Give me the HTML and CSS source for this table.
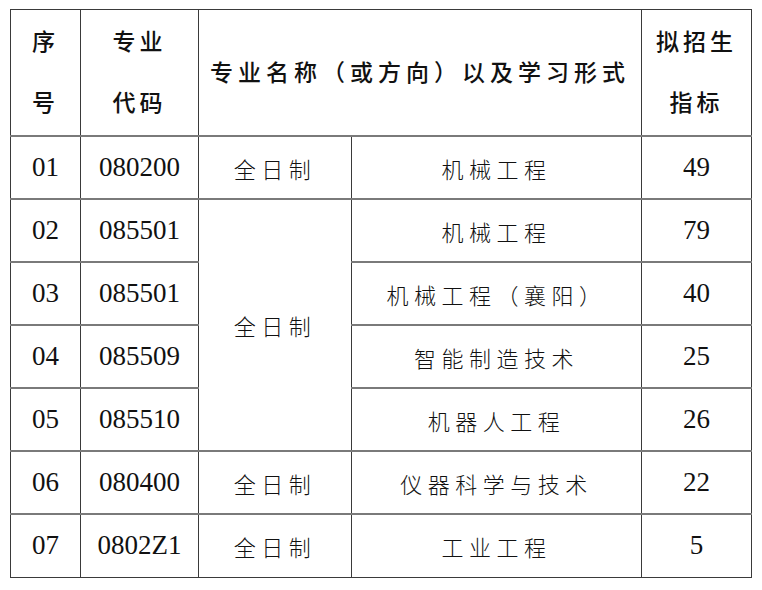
FILE: index.html
```html
<!DOCTYPE html>
<html lang="zh">
<head>
<meta charset="utf-8">
<link rel="stylesheet" href="styles.css">
</head>
<body>
<table class="plan">
  <colgroup>
    <col class="c1"><col class="c2"><col class="c3"><col class="c4"><col class="c5">
  </colgroup>
  <thead>
    <tr class="head">
      <th class="two">序<br>号</th>
      <th class="two">专业<br>代码</th>
      <th colspan="2">专业名称（或方向）以及学习形式</th>
      <th class="two">拟招生<br>指标</th>
    </tr>
  </thead>
  <tbody>
    <tr><td class="num">01</td><td class="num">080200</td><td class="zh">全日制</td><td class="zh">机械工程</td><td class="num">49</td></tr>
    <tr><td class="num">02</td><td class="num">085501</td><td class="zh" rowspan="4">全日制</td><td class="zh">机械工程</td><td class="num">79</td></tr>
    <tr><td class="num">03</td><td class="num">085501</td><td class="zh">机械工程（襄阳）</td><td class="num">40</td></tr>
    <tr><td class="num">04</td><td class="num">085509</td><td class="zh">智能制造技术</td><td class="num">25</td></tr>
    <tr><td class="num">05</td><td class="num">085510</td><td class="zh">机器人工程</td><td class="num">26</td></tr>
    <tr><td class="num">06</td><td class="num">080400</td><td class="zh">全日制</td><td class="zh">仪器科学与技术</td><td class="num">22</td></tr>
    <tr><td class="num">07</td><td class="num">0802Z1</td><td class="zh">全日制</td><td class="zh">工业工程</td><td class="num">5</td></tr>
  </tbody>
</table>
</body>
</html>
```
FILE: styles.css
```css
html, body {
  margin: 0;
  padding: 0;
  background: #fff;
}
body {
  padding: 9px 0 0 10px;
}
.plan {
  border-collapse: collapse;
  table-layout: fixed;
  width: 741px;
  color: #111;
}
.c1 { width: 70px; }
.c2 { width: 118px; }
.c3 { width: 153px; }
.c4 { width: 290px; }
.c5 { width: 110px; }
.plan th, .plan td {
  border: 1px solid #3a3a3a;
  padding: 0;
  text-align: center;
  vertical-align: middle;
}
.plan tbody td {
  border-top: 2px solid #7a7a7a;
}
.head th {
  height: 122px;
  font-family: "Noto Sans CJK SC", sans-serif;
  font-weight: 500;
  font-size: 23px;
  letter-spacing: 5px;
  line-height: 61px;
  padding-bottom: 3px;
  border-bottom: 1px solid #000;
}
.head th.two {
  letter-spacing: 4px;
}
.plan tbody tr {
  height: 63px;
}
.num {
  font-family: "Liberation Serif", "Times New Roman", serif;
  font-size: 27px;
}
.zh {
  font-family: "Noto Sans CJK SC", sans-serif;
  font-weight: 300;
  font-size: 22px;
  line-height: 24px;
  letter-spacing: 5.5px;
  padding-left: 5px;
  padding-bottom: 7px;
}
```
